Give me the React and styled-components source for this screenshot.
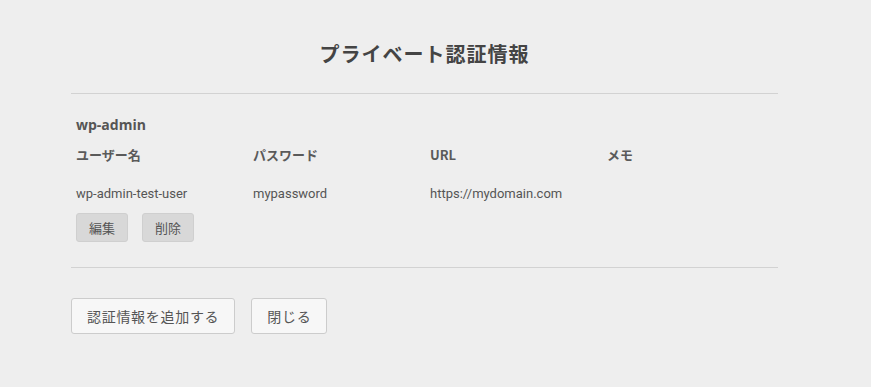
import React from "react";
import styled, { createGlobalStyle } from "styled-components";

const Global = createGlobalStyle`
  html, body { margin: 0; padding: 0; background: #eeeeee; }
  body { font-family: Roboto, "Noto Sans CJK JP", sans-serif; }
`;

const Page = styled.div`
  width: 871px;
  height: 387px;
  background: #eeeeee;
  box-sizing: border-box;
  padding: 36px 93px 0 71px;
`;

const Title = styled.h1`
  margin: 0;
  text-align: center;
  font-family: "Noto Sans CJK JP", sans-serif;
  font-size: 20px;
  font-weight: 700;
  color: #444;
  line-height: 36px;
  letter-spacing: 1px;
`;

const Rule = styled.hr`
  margin: ${(p) => p.$mt}px 0 0 0;
  border: 0;
  border-top: 1px solid #d2d2d2;
  height: 0;
`;

const Section = styled.div`
  padding: 0 0 0 5px;
`;

const Name = styled.h2`
  margin: 21px 0 0;
  font-family: "Open Sans", "Noto Sans CJK JP", sans-serif;
  font-size: 14px;
  font-weight: 700;
  color: #555;
  line-height: 20px;
`;

const Grid = styled.div`
  display: grid;
  grid-template-columns: repeat(4, 177px);
  margin-top: ${(p) => p.$mt}px;
`;

const Head = styled.div`
  font-family: "Noto Sans CJK JP", sans-serif;
  font-size: 13px;
  font-weight: 700;
  color: #5a5a5a;
  line-height: 20px;
`;

const Cell = styled.div`
  font-family: Roboto, "Noto Sans CJK JP", sans-serif;
  font-size: 13px;
  color: #555;
  line-height: 20px;
`;

const Actions = styled.div`
  display: flex;
  gap: 14px;
  margin-top: 9px;
`;

const SmallBtn = styled.button`
  width: 52px;
  height: 29px;
  padding: 0;
  border: 1px solid #cfcfcf;
  border-radius: 3px;
  background: #d8d8d8;
  color: #555;
  font-family: "Noto Sans CJK JP", sans-serif;
  font-size: 13px;
`;

const Footer = styled.div`
  display: flex;
  gap: 16px;
  margin-top: 30px;
`;

const Btn = styled.button`
  height: 36px;
  padding: 0 15px;
  border: 1px solid #cccccc;
  border-radius: 3px;
  background: #f7f7f7;
  color: #555;
  font-family: "Noto Sans CJK JP", sans-serif;
  font-size: 14px;
  letter-spacing: 0.7px;
`;

export default function App() {
  return (
    <>
      <Global />
      <Page>
        <Title>プライベート認証情報</Title>
        <Rule $mt={21} />
        <Section>
          <Name>wp-admin</Name>
          <Grid $mt={10}>
            <Head>ユーザー名</Head>
            <Head>パスワード</Head>
            <Head>URL</Head>
            <Head>メモ</Head>
          </Grid>
          <Grid $mt={19}>
            <Cell>wp-admin-test-user</Cell>
            <Cell>mypassword</Cell>
            <Cell>https://mydomain.com</Cell>
            <Cell></Cell>
          </Grid>
          <Actions>
            <SmallBtn>編集</SmallBtn>
            <SmallBtn>削除</SmallBtn>
          </Actions>
        </Section>
        <Rule $mt={25} />
        <Footer>
          <Btn>認証情報を追加する</Btn>
          <Btn>閉じる</Btn>
        </Footer>
      </Page>
    </>
  );
}
